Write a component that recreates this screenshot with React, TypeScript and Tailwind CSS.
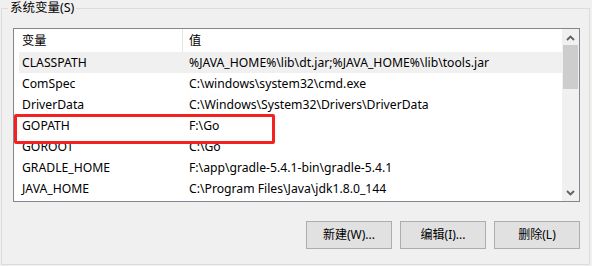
import React from "react";

const ROWS: { name: string; value: string }[] = [
  { name: "CLASSPATH", value: "%JAVA_HOME%\\lib\\dt.jar;%JAVA_HOME%\\lib\\tools.jar" },
  { name: "ComSpec", value: "C:\\windows\\system32\\cmd.exe" },
  { name: "DriverData", value: "C:\\Windows\\System32\\Drivers\\DriverData" },
  { name: "GOPATH", value: "F:\\Go" },
  { name: "GOROOT", value: "C:\\Go" },
  { name: "GRADLE_HOME", value: "F:\\app\\gradle-5.4.1-bin\\gradle-5.4.1" },
  { name: "JAVA_HOME", value: "C:\\Program Files\\Java\\jdk1.8.0_144" },
];

const FONT = { fontFamily: '"Segoe UI", "Noto Sans", "Noto Sans CJK SC", sans-serif' };

function Chevron({ up }: { up?: boolean }) {
  return (
    <svg width="9" height="6" viewBox="0 0 9 6" className="block">
      <path
        d={up ? "M1 5 L4.5 1.5 L8 5" : "M1 1 L4.5 4.5 L8 1"}
        fill="none"
        stroke="#606060"
        strokeWidth="1.8"
      />
    </svg>
  );
}

export default function App() {
  return (
    <div
      className="w-[592px] h-[266px] bg-[#f0f0f0] text-[12.2px] text-black relative overflow-hidden"
      style={FONT}
    >
      {/* group box */}
      <div className="relative ml-[1px] mt-[8px] w-[589px] h-[257px] border border-[#dcdcdc] pl-[11px] pt-[19px]">
        <span className="absolute left-[6px] top-[-10px] px-[2px] bg-[#f0f0f0] leading-[18px] text-[12.5px]">
          系统变量(S)
        </span>

        {/* list box */}
        <div className="relative w-[567px] h-[174px] border border-[#828790] bg-white flex">
          <div className="flex-1 flex flex-col">
            <div className="h-[23px] flex items-center relative pt-[2px]">
              <span className="pl-[8px] w-[175px]">变量</span>
              <span className="absolute left-[168px] top-0 h-[23px] w-px bg-[#e5e5e5]" />
              <span>值</span>
            </div>
            {ROWS.map((r, i) => (
              <div
                key={r.name}
                className={`h-[21px] ml-[5px] pl-[3px] pt-[2px] flex items-center whitespace-nowrap ${i === 0 ? "bg-[#f0f0f0]" : ""}`}
              >
                <span className="w-[167px]">{r.name}</span>
                <span>{r.value}</span>
              </div>
            ))}
          </div>

          {/* scrollbar */}
          <div className="w-[17px] bg-[#f0f0f0] flex flex-col items-center">
            <div className="h-[16px] flex items-center justify-center pt-[2px]">
              <Chevron up />
            </div>
            <div className="w-[15px] h-[44px] bg-[#cdcdcd]" />
            <div className="flex-1" />
            <div className="h-[17px] flex items-center justify-center">
              <Chevron />
            </div>
          </div>

          {/* highlight marker */}
          <div className="absolute left-0 top-[85px] w-[261px] h-[30px] border-[3px] border-[#f52020] rounded-[2px]" />
        </div>

        {/* buttons */}
        <div className="flex justify-end gap-[8px] mt-[19px] w-[567px]">
          {["新建(W)...", "编辑(I)...", "删除(L)"].map((t) => (
            <button
              key={t}
              className="w-[86px] h-[28px] bg-[#e1e1e1] border border-[#adadad] text-[12px] text-black"
              style={FONT}
            >
              {t}
            </button>
          ))}
        </div>
      </div>
    </div>
  );
}
